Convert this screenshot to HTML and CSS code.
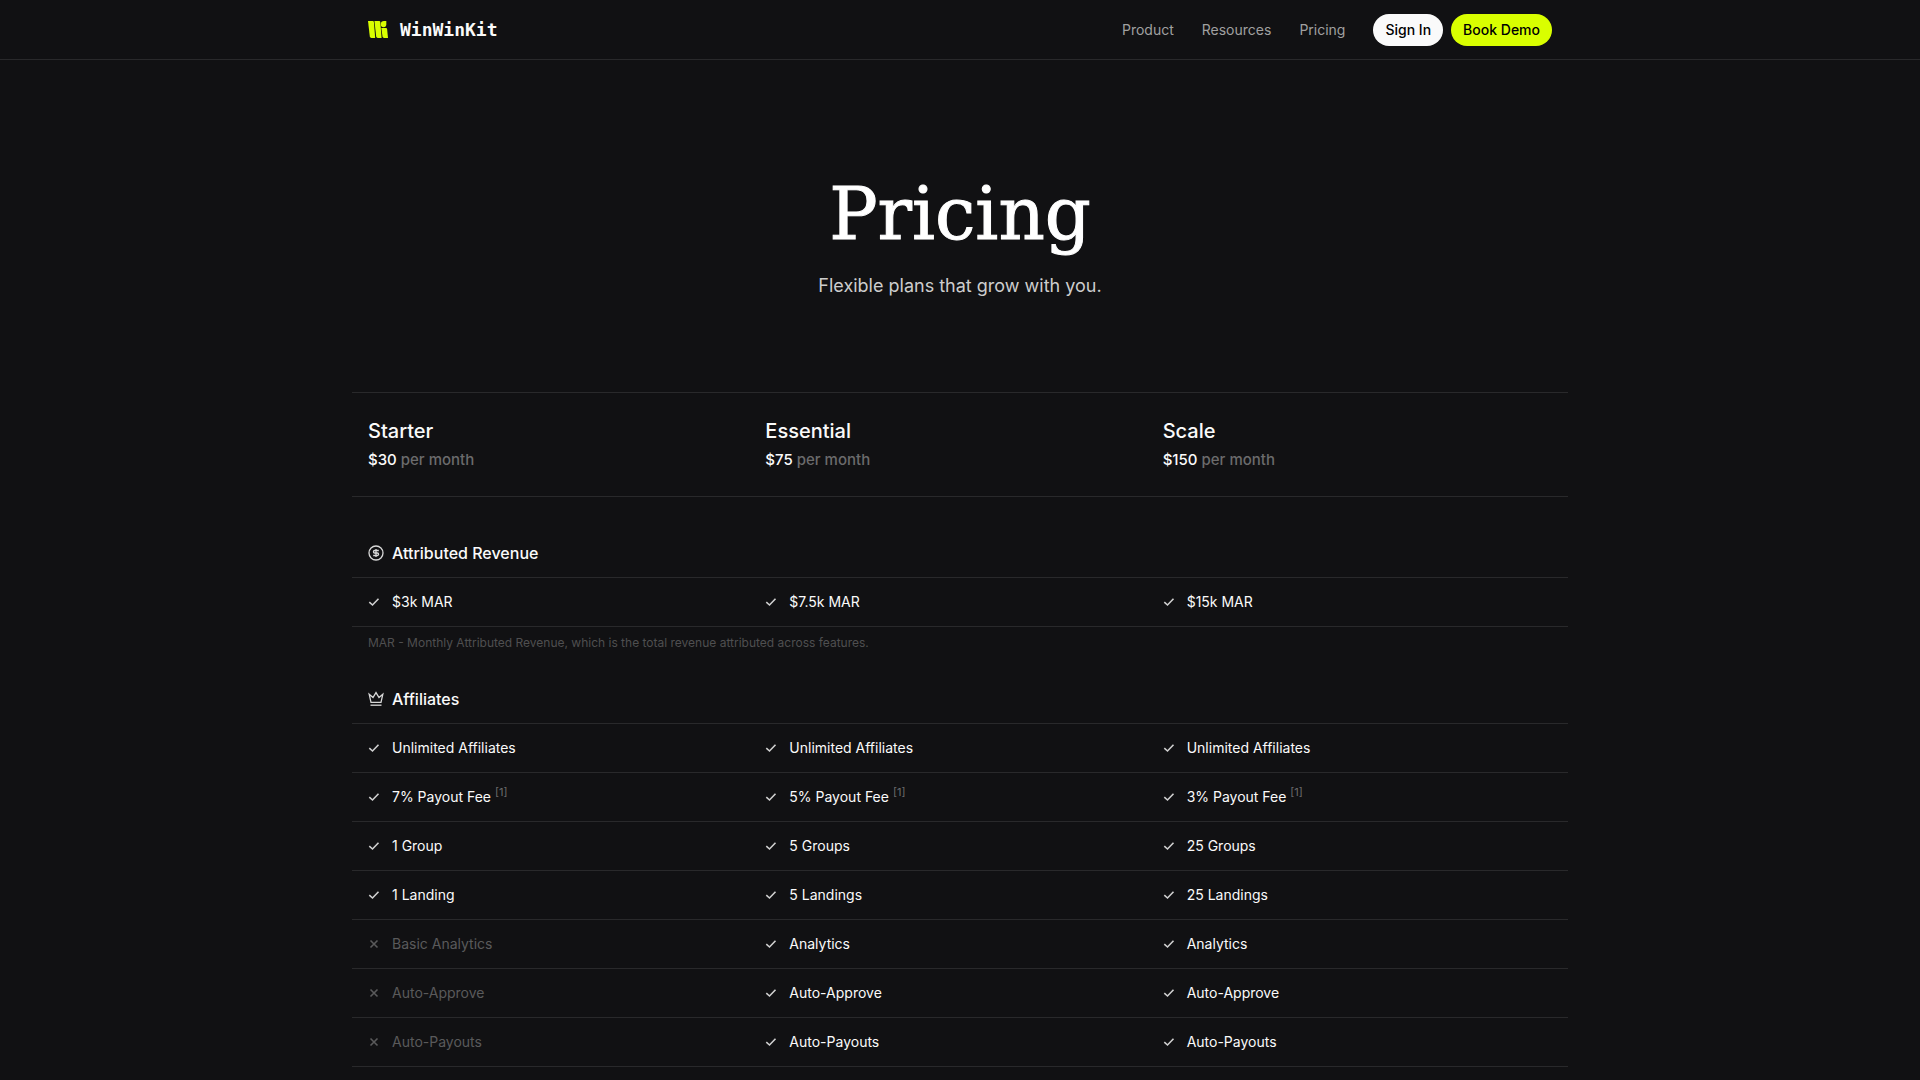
FILE: index.html
```html
<!DOCTYPE html>
<html lang="en">
<head>
    <meta charset="UTF-8">
    <meta name="viewport" content="width=device-width, initial-scale=1.0">
    <title>Pricing - WinWinKit</title>
    <link rel="stylesheet" href="styles.css">
</head>
<body>

<!-- Shared icons -->
<svg class="icon-defs" aria-hidden="true">
    <symbol id="check" viewBox="0 0 12 12">
        <path d="M1.3 6.200 4.500 9 10.500 2.800" fill="none" stroke="currentColor" stroke-width="1.6"/>
    </symbol>
    <symbol id="cross" viewBox="0 0 12 12">
        <path d="M2.5 2.5 9.5 9.5M9.5 2.5 2.5 9.5" fill="none" stroke="currentColor" stroke-width="1.6"/>
    </symbol>
</svg>

<header class="header">
    <div class="header-inner">
        <a class="logo" href="#">
            <svg class="logo-mark" viewBox="0 0 20 18" aria-hidden="true">
                <path d="M0 0h4.800q1 0 1.100 1L7.200 17H3.400q-1.400 0-1.600-1.400z"/>
                <path d="M6.400 0h4.800q1 0 1.100 1L13.600 17H9.800q-1.400 0-1.600-1.400z"/>
                <path d="M13.300 7h4.700q1 0 1.100 1L20 17h-3.900q-1.400 0-1.600-1.400z"/>
                <path d="M12.800 3Q12.800 0 16 0h2.300v3.200q0 3-2.800 3Q12.800 6.200 12.800 3z"/>
            </svg>
            WinWinKit
        </a>
        <nav class="nav">
            <a href="#">Product</a>
            <a href="#">Resources</a>
            <a href="#">Pricing</a>
            <div class="nav-actions">
                <button class="btn btn-light">Sign In</button>
                <button class="btn btn-lime">Book Demo</button>
            </div>
        </nav>
    </div>
</header>

<main>
    <section class="hero">
        <h1>Pricing</h1>
        <p>Flexible plans that grow with you.</p>
    </section>

    <table class="pricing">
        <thead>
            <tr class="plans">
                <th scope="col"><h2>Starter</h2><p>$30 <span>per month</span></p></th>
                <th scope="col"><h2>Essential</h2><p>$75 <span>per month</span></p></th>
                <th scope="col"><h2>Scale</h2><p>$150 <span>per month</span></p></th>
            </tr>
        </thead>

        <!-- Attributed Revenue -->
        <tbody>
            <tr class="section-title">
                <th colspan="3">
                    <svg viewBox="0 0 16 16" aria-hidden="true">
                        <circle cx="8" cy="8" r="7"/>
                        <path d="M10.800 5.500H6.700a1.250 1.250 0 0 0 0 2.500h2.600a1.250 1.250 0 0 1 0 2.500H5.200M8 4v8"/>
                    </svg>
                    Attributed Revenue
                </th>
            </tr>
            <tr>
                <td><svg><use href="#check"/></svg>$3k MAR</td>
                <td><svg><use href="#check"/></svg>$7.5k MAR</td>
                <td><svg><use href="#check"/></svg>$15k MAR</td>
            </tr>
            <tr class="note">
                <td colspan="3">MAR - Monthly Attributed Revenue, which is the total revenue attributed across features.</td>
            </tr>
        </tbody>

        <!-- Affiliates -->
        <tbody>
            <tr class="section-title">
                <th colspan="3">
                    <svg viewBox="0 0 16 16" aria-hidden="true">
                        <path d="M3 11.300 1.200 3.300 5 6.500 8 1.600 11 6.500 14.800 3.300 13 11.300z"/>
                        <path d="M2.500 14.200h11"/>
                    </svg>
                    Affiliates
                </th>
            </tr>
            <tr>
                <td><svg><use href="#check"/></svg>Unlimited Affiliates</td>
                <td><svg><use href="#check"/></svg>Unlimited Affiliates</td>
                <td><svg><use href="#check"/></svg>Unlimited Affiliates</td>
            </tr>
            <tr>
                <td><svg><use href="#check"/></svg><span>7% Payout Fee <sup>[1]</sup></span></td>
                <td><svg><use href="#check"/></svg><span>5% Payout Fee <sup>[1]</sup></span></td>
                <td><svg><use href="#check"/></svg><span>3% Payout Fee <sup>[1]</sup></span></td>
            </tr>
            <tr>
                <td><svg><use href="#check"/></svg>1 Group</td>
                <td><svg><use href="#check"/></svg>5 Groups</td>
                <td><svg><use href="#check"/></svg>25 Groups</td>
            </tr>
            <tr>
                <td><svg><use href="#check"/></svg>1 Landing</td>
                <td><svg><use href="#check"/></svg>5 Landings</td>
                <td><svg><use href="#check"/></svg>25 Landings</td>
            </tr>
            <tr>
                <td class="off"><svg><use href="#cross"/></svg>Basic Analytics</td>
                <td><svg><use href="#check"/></svg>Analytics</td>
                <td><svg><use href="#check"/></svg>Analytics</td>
            </tr>
            <tr>
                <td class="off"><svg><use href="#cross"/></svg>Auto-Approve</td>
                <td><svg><use href="#check"/></svg>Auto-Approve</td>
                <td><svg><use href="#check"/></svg>Auto-Approve</td>
            </tr>
            <tr>
                <td class="off"><svg><use href="#cross"/></svg>Auto-Payouts</td>
                <td><svg><use href="#check"/></svg>Auto-Payouts</td>
                <td><svg><use href="#check"/></svg>Auto-Payouts</td>
            </tr>
        </tbody>
    </table>
</main>

</body>
</html>
```
FILE: styles.css
```css
* {
    box-sizing: border-box;
}

body {
    margin: 0;
    background: #111113;
    color: #fafafa;
    font-family: Inter, "Liberation Sans", sans-serif;
    font-size: 14px;
    line-height: 20px;
}

h1, h2, p {
    margin: 0;
}

a {
    color: inherit;
    text-decoration: none;
}

.icon-defs {
    display: none;
}

/* Header */
.header {
    border-bottom: 1px solid #29292b;
}

.header-inner {
    display: flex;
    justify-content: space-between;
    align-items: center;
    max-width: 1216px;
    margin: 0 auto;
    padding: 14px 16px 13px;
}

.logo {
    display: flex;
    align-items: center;
    gap: 12px;
    font-family: "DejaVu Sans Mono", monospace;
    font-size: 18px;
    font-weight: 700;
}

.logo-mark {
    width: 20px;
    height: 18px;
    fill: #d9ff00;
}

.nav {
    display: flex;
    align-items: center;
    gap: 28px;
    color: #a0a0a0;
}

.nav a:hover {
    color: #fafafa;
}

.nav-actions {
    display: flex;
    gap: 8px;
}

.btn {
    height: 32px;
    padding: 0 12px;
    border: none;
    border-radius: 16px;
    color: #000;
    font: inherit;
    font-weight: 500;
    cursor: pointer;
}

.btn-light {
    background: #fafafa;
}

.btn-lime {
    background: #d9ff00;
}

/* Hero */
.hero {
    padding: 110px 16px 92px;
    text-align: center;
}

.hero h1 {
    font-family: "DejaVu Serif", serif;
    font-size: 72px;
    font-weight: 400;
    line-height: 88px;
    color: #fff;
    -webkit-text-stroke: 1px #fff;
}

.hero p {
    margin-top: 14px;
    font-size: 18px;
    line-height: 28px;
    color: #cdcdcd;
}

/* Pricing table */
.pricing {
    display: flex;
    flex-direction: column;
    max-width: 1216px;
    margin: 0 auto;
    border-top: 1px solid #29292b;
}

.pricing thead,
.pricing tbody {
    display: block;
}

.pricing thead {
    margin-bottom: 16px;
}

.pricing tr {
    display: grid;
    grid-template-columns: repeat(3, 1fr);
    gap: 8px;
    padding: 0 16px;
    border-bottom: 1px solid #29292b;
}

.pricing th {
    padding: 0;
    font-weight: 500;
    text-align: left;
}

.pricing td {
    display: flex;
    align-items: center;
    gap: 12px;
    height: 48px;
    padding: 0;
}

.pricing td svg {
    flex: none;
    width: 12px;
    height: 12px;
    color: #d0d0d0;
}

.pricing tr.plans {
    padding: 24px 16px 25px;
}

.plans h2 {
    font-size: 20px;
    font-weight: 500;
    line-height: 28px;
}

.plans p {
    margin-top: 4px;
    font-size: 15px;
    line-height: 22px;
}

.plans span {
    color: #6b6b6c;
}

.section-title th {
    grid-column: 1 / -1;
    display: flex;
    align-items: center;
    gap: 8px;
    height: 64px;
    padding-top: 16px;
    font-size: 16px;
}

.section-title svg {
    width: 16px;
    height: 16px;
    fill: none;
    stroke: #d8d8d8;
    stroke-width: 1.3;
}

.pricing tr.note {
    border-bottom: none;
}

.note td {
    grid-column: 1 / -1;
    height: 32px;
    font-size: 12px;
    color: #4f4f50;
}

.pricing .off,
.pricing .off svg {
    color: #5a5a5b;
}

sup {
    font-size: 11px;
    line-height: 0;
    color: #6b6b6c;
}
```
